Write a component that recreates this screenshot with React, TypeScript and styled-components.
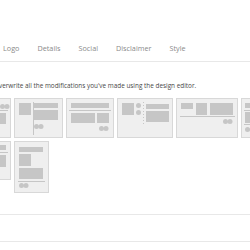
import React from "react";
import styled, { createGlobalStyle } from "styled-components";

const GlobalStyle = createGlobalStyle`
  html, body { margin: 0; padding: 0; background: #fff; overflow: hidden; }
  body { font-family: "Open Sans", "Noto Sans", sans-serif; }
`;

const Page = styled.div`
  width: 250px;
  height: 250px;
  overflow: hidden;
  background: #fff;
`;

const Panel = styled.div`
  margin-left: -6px;
  width: 262px;
`;

const TabBar = styled.nav`
  display: flex;
  margin-top: 43px;
  border-bottom: 1px solid #e8e8e8;
`;

const Tab = styled.div`
  padding: 0 9px 8px;
  font-size: 7.25px;
  line-height: 10px;
  color: #8a8a8a;
  white-space: nowrap;
`;

const Notice = styled.p`
  margin: 19px 0 0;
  font-size: 6.4px;
  line-height: 10px;
  color: #474747;
  white-space: nowrap;
`;

const Grid = styled.div`
  display: flex;
  flex-wrap: wrap;
  align-items: flex-start;
  gap: 3px;
  margin: 7px 0 0 -31px;
  width: 340px;
`;

const Thumb = styled.div<{ $w: number; $h: number }>`
  flex: none;
  box-sizing: border-box;
  width: ${(p) => p.$w}px;
  height: ${(p) => p.$h}px;
  border: 1px solid #d8d8d8;
  background: #efefef;
  svg { display: block; }
`;

const Section = styled.div`
  margin-top: 21px;
  height: 26px;
  border-top: 1px solid #e8e8e8;
  border-bottom: 1px solid #e8e8e8;
`;

const G = "#c6c6c6";

const R = (x: number, y: number, w: number, h: number) => (
  <rect x={x} y={y} width={w} height={h} fill={G} />
);
const C = (cx: number, cy: number) => <circle cx={cx} cy={cy} r={2.5} fill={G} />;
const H = (x1: number, x2: number, y: number) => (
  <line x1={x1} x2={x2} y1={y + 0.5} y2={y + 0.5} stroke={G} strokeWidth={1} />
);

type ThumbDef = { w: number; h: number; shapes: React.ReactNode };

const thumbs: ThumbDef[] = [
  {
    w: 48,
    h: 40,
    shapes: (
      <>
        {R(5, 5, 28, 5)}
        {C(39.5, 8.5)}
        {C(44, 8.5)}
        {H(3, 45, 12)}
        {R(5, 15, 22, 11)}
        {R(30, 15, 13, 11)}
      </>
    ),
  },
  {
    w: 49,
    h: 40,
    shapes: (
      <>
        {R(5, 5, 12, 12)}
        <line x1={19.5} x2={19.5} y1={4} y2={37} stroke={G} strokeWidth={1} />
        {R(20, 5, 24, 5)}
        {R(20, 12, 24, 10)}
        {C(22.5, 28.5)}
        {C(27, 28.5)}
      </>
    ),
  },
  {
    w: 48,
    h: 40,
    shapes: (
      <>
        {R(5, 5, 38, 5)}
        {H(3, 45, 12)}
        {R(5, 15, 24, 10)}
        {R(31, 15, 12, 10)}
        {C(35.5, 30.5)}
        {C(40, 30.5)}
      </>
    ),
  },
  {
    w: 56,
    h: 40,
    shapes: (
      <>
        {R(5, 5, 12, 12)}
        {C(21.5, 7.5)}
        {C(21.5, 14.5)}
        <line x1={26.5} x2={26.5} y1={4} y2={27} stroke={G} strokeWidth={1} strokeDasharray="1 2" />
        {R(29, 6, 23, 5)}
        {R(29, 13, 23, 11)}
      </>
    ),
  },
  {
    w: 62,
    h: 40,
    shapes: (
      <>
        {R(5, 5, 12, 6)}
        {R(20, 5, 11, 12)}
        {R(34, 5, 23, 12)}
        {H(4, 59, 18)}
        {C(49.5, 23.5)}
        {C(54, 23.5)}
      </>
    ),
  },
  {
    w: 48,
    h: 40,
    shapes: (
      <>
        {R(4, 5, 30, 5)}
        {H(3, 45, 12)}
        {R(4, 14, 12, 11)}
        {R(19, 14, 24, 11)}
        {H(3, 45, 26)}
        {C(6.5, 31.5)}
        {C(11, 31.5)}
      </>
    ),
  },
  {
    w: 48,
    h: 39,
    shapes: (
      <>
        {R(5, 4, 38, 5)}
        {H(3, 45, 11)}
        {R(5, 14, 20, 12)}
        {R(28, 14, 15, 12)}
        {C(7.5, 31.5)}
        {C(12, 31.5)}
      </>
    ),
  },
  {
    w: 35,
    h: 52,
    shapes: (
      <>
        {R(5, 6, 24, 5)}
        {R(5, 13, 12, 12)}
        {R(5, 27, 24, 11)}
        {H(4, 31, 40)}
        {C(7.5, 44.5)}
        {C(12, 44.5)}
      </>
    ),
  },
];

const tabs = ["Logo", "Details", "Social", "Disclaimer", "Style"];

export default function App() {
  return (
    <Page>
      <GlobalStyle />
      <Panel>
        <TabBar>
          {tabs.map((t) => (
            <Tab key={t}>{t}</Tab>
          ))}
        </TabBar>
        <Notice>Overwrite all the modifications you've made using the design editor.</Notice>
        <Grid>
          {thumbs.map((t, i) => (
            <Thumb key={i} $w={t.w} $h={t.h}>
              <svg width={t.w - 2} height={t.h - 2} viewBox={`1 1 ${t.w - 2} ${t.h - 2}`}>
                {t.shapes}
              </svg>
            </Thumb>
          ))}
        </Grid>
        <Section />
      </Panel>
    </Page>
  );
}
